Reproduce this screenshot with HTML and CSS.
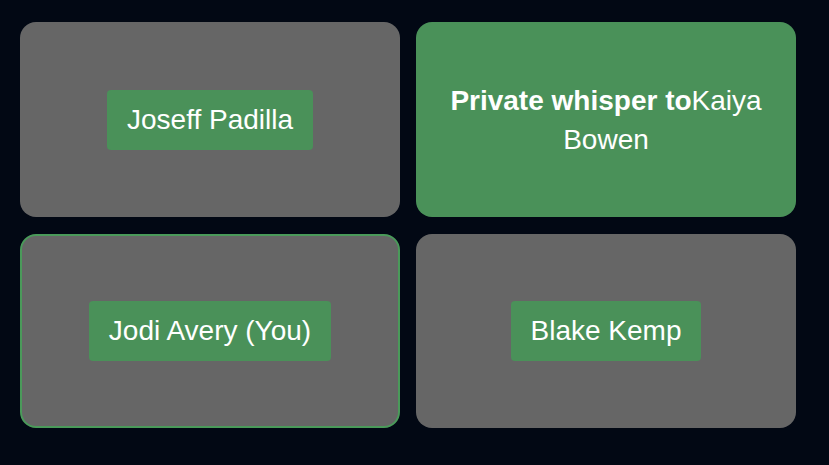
FILE: index.html
```html
<!DOCTYPE html>
<html>
<head>
<meta charset="utf-8">
<link rel="stylesheet" href="styles.css">
</head>
<body>
<div class="grid">
  <div class="tile"><span class="label">Joseff Padilla</span></div>
  <div class="tile whisper"><div class="whisper-text"><b>Private whisper to</b>Kaiya Bowen</div></div>
  <div class="tile self"><span class="label">Jodi Avery (You)</span></div>
  <div class="tile"><span class="label">Blake Kemp</span></div>
</div>
</body>
</html>
```
FILE: styles.css
```css
html, body {
  margin: 0;
  height: 100%;
  background: #020814;
}
body {
  font-family: "Liberation Sans", Arial, sans-serif;
  color: #ffffff;
}
.grid {
  display: grid;
  grid-template-columns: 380px 380px;
  grid-template-rows: 195px 194px;
  gap: 17px 16px;
  padding: 22px 20px;
}
.tile {
  background: #666666;
  border-radius: 16px;
  display: flex;
  align-items: center;
  justify-content: center;
  box-sizing: border-box;
}
.tile.self {
  border: 2px solid #4a9a5a;
}
.tile.whisper {
  background: #4a9159;
  padding: 0 20px;
}
.label {
  background: #4a9159;
  border-radius: 4px;
  padding: 14px 20px;
  font-size: 28px;
  line-height: 32px;
}
.whisper-text {
  font-size: 28px;
  line-height: 39px;
  text-align: center;
}
```
